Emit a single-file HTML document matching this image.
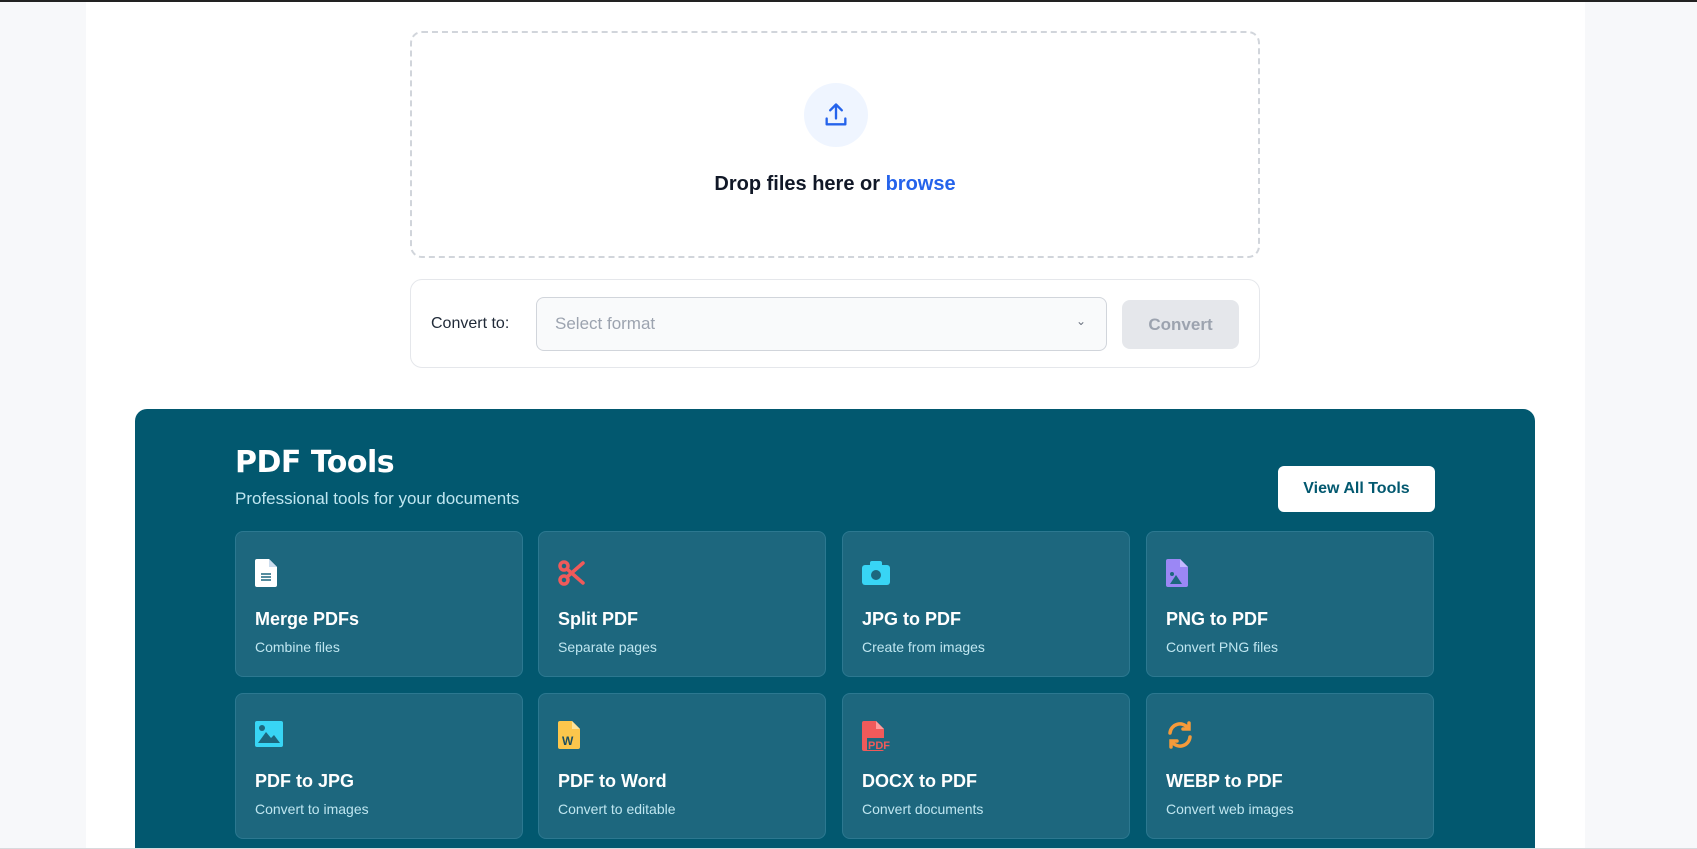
<!DOCTYPE html>
<html><head><meta charset="utf-8"><style>
*{margin:0;padding:0;box-sizing:border-box}
html,body{width:1697px;height:849px;overflow:hidden}
body{background:#f7f8fa;font-family:"Liberation Sans",sans-serif;position:relative}
.topbar{position:absolute;left:0;top:0;width:1697px;height:2px;background:#222}
.col{position:absolute;left:86px;top:2px;width:1499px;height:847px;background:#fff}
.drop{position:absolute;left:410px;top:31px;width:850px;height:227px;border:2px dashed #d1d5db;border-radius:12px}
.circle{position:absolute;left:392px;top:50px;width:64px;height:64px;border-radius:50%;background:#eff5ff;display:flex;align-items:center;justify-content:center}
.droptxt{position:absolute;left:0;width:100%;top:140px;text-align:center;font-size:20px;font-weight:bold;color:#111827}
.droptxt span{color:#2563eb}
.conv{position:absolute;left:410px;top:279px;width:850px;height:89px;border:1px solid #e5e7eb;border-radius:12px}
.lbl{position:absolute;left:20px;top:35px;font-size:16px;color:#1f2937}
.sel{position:absolute;left:125px;top:17px;width:571px;height:54px;border:1px solid #d1d5db;border-radius:8px;background:#f9fafb;font-size:17px;color:#9ca3af;padding:16px 18px}
.sel i{position:absolute;right:20px;top:16px;font-style:normal;font-size:12px;color:#6b7280}
.btn{position:absolute;left:711px;top:20px;width:117px;height:49px;border-radius:8px;background:#e5e7eb;color:#9ca3af;font-weight:bold;font-size:17px;text-align:center;line-height:49px}
.panel{position:absolute;left:135px;top:409px;width:1400px;height:439px;background:#02586f;border-radius:12px 12px 0 0}
.bl{position:absolute;left:0;top:848px;width:1697px;height:1px;background:#d8dadd}
h1{position:absolute;left:100px;top:36px;font-family:"DejaVu Sans",sans-serif;font-weight:bold;font-size:30px;color:#fff;letter-spacing:-0.5px}
.sub{position:absolute;left:100px;top:80px;font-size:17px;color:#bfe6f0}
.va{position:absolute;left:1143px;top:57px;width:157px;height:46px;background:#fff;border-radius:6px;color:#02586f;font-weight:bold;font-size:16px;text-align:center;line-height:46px}
.card{position:absolute;width:288px;height:146px;background:#1d677e;border:1px solid #2c7890;border-radius:8px}
.card svg{position:absolute;left:19px;top:27px}
.card b{position:absolute;left:19px;top:77px;font-size:18px;color:#fff}
.card p{position:absolute;left:19px;top:107px;font-size:14px;color:#bfe6f0}
</style></head><body>
<div class="topbar"></div>
<div class="col"></div>
<div class="drop">
 <div class="circle"><svg width="28" height="28" viewBox="0 0 24 24" fill="none" stroke="#2563eb" stroke-width="2" stroke-linecap="round" stroke-linejoin="round"><path d="M12 15V3M7 8l5-5 5 5M4 15v5h16v-5"/></svg></div>
 <div class="droptxt">Drop files here or <span>browse</span></div>
</div>
<div class="conv">
 <div class="lbl">Convert to:</div>
 <div class="sel">Select format<i>⌄</i></div>
 <div class="btn">Convert</div>
</div>
<div class="panel">
 <h1>PDF Tools</h1>
 <div class="sub">Professional tools for your documents</div>
 <div class="va">View All Tools</div>
</div>
<div class="bl"></div>
<div class="card" style="left:235px;top:531px"><svg width="22" height="28" viewBox="0 0 22 28"><path d="M2 0h12l8 8v18a2 2 0 0 1-2 2H2a2 2 0 0 1-2-2V2a2 2 0 0 1 2-2z" fill="#fff"/><path d="M14 0v8h8" fill="#cde"/><path d="M6 15h10M6 18h10M6 21h10" stroke="#1d677e" stroke-width="1.5"/></svg><b>Merge PDFs</b><p>Combine files</p></div>
<div class="card" style="left:538px;top:531px"><svg width="28" height="28" viewBox="0 0 28 28" fill="none" stroke="#f05a5a" stroke-width="3.5"><circle cx="6" cy="7" r="4"/><circle cx="6" cy="21" r="4"/><path d="M9 18L25 4M9 10l16 14" stroke-linecap="round"/></svg><b>Split PDF</b><p>Separate pages</p></div>
<div class="card" style="left:842px;top:531px"><svg width="28" height="28" viewBox="0 0 28 28"><rect x="0" y="6" width="28" height="20" rx="3" fill="#38d5f5"/><rect x="8" y="2" width="12" height="6" rx="2" fill="#38d5f5"/><circle cx="14" cy="16" r="5" fill="#1d677e"/></svg><b>JPG to PDF</b><p>Create from images</p></div>
<div class="card" style="left:1146px;top:531px"><svg width="22" height="28" viewBox="0 0 22 28"><path d="M2 0h12l8 8v18a2 2 0 0 1-2 2H2a2 2 0 0 1-2-2V2a2 2 0 0 1 2-2z" fill="#9b87f5"/><path d="M14 0v8h8" fill="#c4b8ff"/><circle cx="6" cy="15" r="2" fill="#1d677e"/><path d="M4 25l6-9 6 9z" fill="#1d677e"/></svg><b>PNG to PDF</b><p>Convert PNG files</p></div>
<div class="card" style="left:235px;top:693px"><svg width="28" height="26" viewBox="0 0 28 26"><rect width="28" height="26" rx="2" fill="#38d5f5"/><circle cx="7" cy="7" r="3" fill="#1d677e"/><path d="M3 22l8-11 5 6 3-3 6 8z" fill="#1d677e"/></svg><b>PDF to JPG</b><p>Convert to images</p></div>
<div class="card" style="left:538px;top:693px"><svg width="22" height="28" viewBox="0 0 22 28"><path d="M2 0h12l8 8v18a2 2 0 0 1-2 2H2a2 2 0 0 1-2-2V2a2 2 0 0 1 2-2z" fill="#fcc64c"/><path d="M14 0v8h8" fill="#fde39a"/><text x="4" y="24" font-family="Liberation Sans" font-weight="bold" font-size="12" fill="#1d4f60">W</text></svg><b>PDF to Word</b><p>Convert to editable</p></div>
<div class="card" style="left:842px;top:693px"><svg width="30" height="30" viewBox="0 0 30 30"><path d="M2 0h12l8 8v20a2 2 0 0 1-2 2H2a2 2 0 0 1-2-2V2a2 2 0 0 1 2-2z" fill="#f05a5a"/><path d="M14 0v8h8" fill="#ff9c9c"/><rect x="5" y="17" width="25" height="12" fill="#1d677e"/><text x="6" y="28" font-family="Liberation Sans" font-weight="bold" font-size="11" fill="#f05a5a">PDF</text></svg><b>DOCX to PDF</b><p>Convert documents</p></div>
<div class="card" style="left:1146px;top:693px"><svg width="28" height="28" viewBox="0 0 28 28" fill="none" stroke="#f59a3a" stroke-width="3.5" stroke-linecap="round"><path d="M4 12a10 10 0 0 1 18-5"/><path d="M24 16a10 10 0 0 1-18 5"/><path d="M23 2v6h-6" fill="#f59a3a"/><path d="M5 26v-6h6"/></svg><b>WEBP to PDF</b><p>Convert web images</p></div>
</body></html>
